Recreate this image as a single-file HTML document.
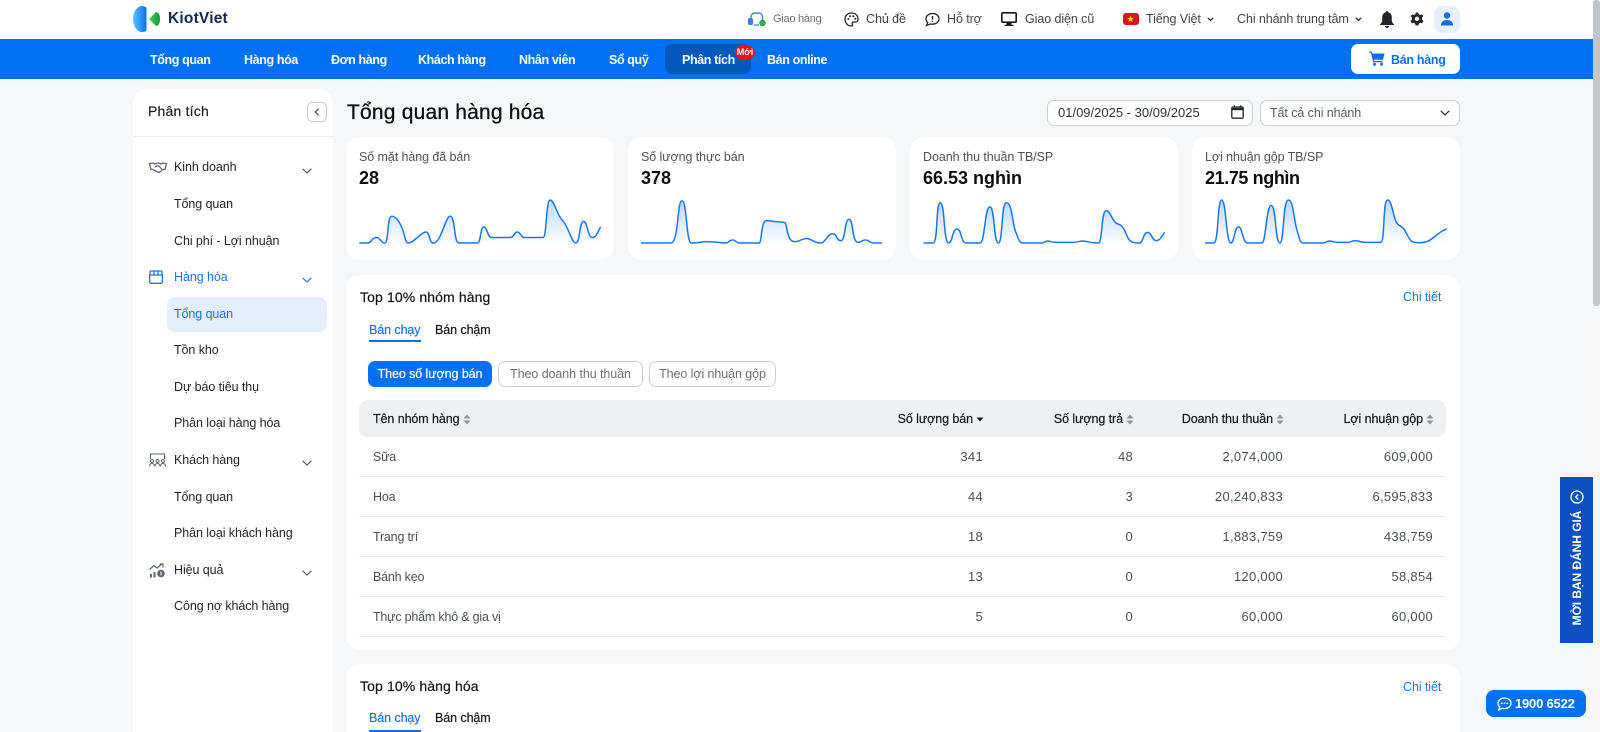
<!DOCTYPE html>
<html lang="vi"><head><meta charset="utf-8"><title>Tổng quan hàng hóa</title>
<style>
*{box-sizing:border-box}
html,body{margin:0;padding:0;width:1600px;height:732px;overflow:hidden;background:#f6f7f9;font-family:"Liberation Sans",Arial,sans-serif;color:#1a1c20}
#w{position:absolute;left:0;top:0;width:1600px;height:732px;overflow:hidden;background:#f6f7f9}
.a{position:absolute}
.t{position:absolute;white-space:nowrap;transform:translateY(-50%);font-size:12.500px;line-height:18px;letter-spacing:-.08px}
.r{transform:translate(-100%,-50%)}
.n{color:#fff;font-weight:700;font-size:12.500px;letter-spacing:-.38px}
.top{color:#3f444d}
.s{color:#1f2329}
.card{position:absolute;background:#fff;border-radius:14px}
.lab{color:#4d525a}
.val{font-weight:700;font-size:18px;color:#0c0e12;letter-spacing:0}
.h{font-weight:500;color:#111317;font-size:14px;letter-spacing:.12px;-webkit-text-stroke:.2px #111317}
.th{color:#16181c;-webkit-text-stroke:.2px #16181c}
.td{color:#4a4f57;letter-spacing:-.2px}
.num{color:#4a4f57;font-size:13px;letter-spacing:.3px}
.line{position:absolute;left:359px;width:1087px;height:1px;background:#e6e7ea}
.btn{position:absolute;top:361px;height:26px;border-radius:7px;border:1px solid #ccd0d6;background:#fff;color:#6b7078;font-size:12.500px;line-height:24px;text-align:center;letter-spacing:-.08px;white-space:nowrap}
svg{position:absolute;overflow:visible}
.sp{stroke:#1677f5;stroke-width:4.300;fill:none}
</style></head><body><div id="w">
<!-- header -->
<div class="a" style="left:0;top:0;width:1593px;height:39px;background:#fff"></div>
<svg style="left:133px;top:6px" width="28" height="26" viewBox="0 0 28 26"><defs><linearGradient id="lg" x1="0" x2="1" y1="0" y2="0"><stop offset="0" stop-color="#5cc4fb"/><stop offset="1" stop-color="#0a70ef"/></linearGradient><linearGradient id="lh" x1="0" x2="1"><stop offset="0" stop-color="#4fd14a"/><stop offset="1" stop-color="#0a9c36"/></linearGradient></defs><path d="M8 0C11 0 13 1 13.500 2V24C13 25.500 11 26 8 26C3 25 0 19 0 13C0 7 3 1 8 0Z" fill="url(#lg)"/><path d="M16 13L23 6C25.500 6 27 9 27 13C27 17 25.500 20 23 20Z" fill="url(#lh)"/></svg>
<div class="t" style="left:168px;top:19px;font-size:15.500px;font-weight:700;color:#10294f;letter-spacing:.2px">KiotViet</div>

<svg style="left:748px;top:12px" width="18" height="15" viewBox="0 0 18 15"><path d="M3 9V5C3 2.500 5 1 7 1H11C13 1 14.500 2.500 14.500 5V9" fill="none" stroke="#3b82e8" stroke-width="1.400"/><rect x="0" y="6" width="5" height="7" rx="1.500" fill="#3b82e8"/><circle cx="14.500" cy="11" r="2.800" fill="#2db84a" stroke="#12812f" stroke-width=".6"/><path d="M6 13H11" stroke="#3b82e8" stroke-width="1.300"/></svg>
<div class="t" style="left:773px;top:19px;font-size:11px;color:#6c7077;letter-spacing:-.25px">Giao hàng</div>
<svg style="left:844px;top:12px" width="15" height="15" viewBox="0 0 15 15"><path d="M7.500 1C3.600 1 1 3.800 1 7.300C1 11 3.800 14 7.300 14C8.800 14 8.800 12.800 8.300 12C7.800 11 8.300 10 9.500 10H11.500C13 10 14 8.800 14 7C14 3.500 11.300 1 7.500 1Z" fill="none" stroke="#22252a" stroke-width="1.300"/><circle cx="4.300" cy="7" r="1" fill="#22252a"/><circle cx="6" cy="4.200" r="1" fill="#22252a"/><circle cx="9.300" cy="4.200" r="1" fill="#22252a"/><circle cx="11.300" cy="6.800" r="1" fill="#22252a"/></svg>
<div class="t top" style="left:866px;top:19px">Chủ đề</div>
<svg style="left:925px;top:12px" width="15" height="15" viewBox="0 0 15 15"><path d="M7.500 1.500C3.800 1.500 1 3.800 1 6.800C1 8.300 1.700 9.600 2.800 10.500L1.500 13.500L5.200 12C5.900 12.100 6.700 12.200 7.500 12.200C11.200 12.200 14 9.800 14 6.800C14 3.800 11.200 1.500 7.500 1.500Z" fill="none" stroke="#22252a" stroke-width="1.300"/><path d="M7.500 4V7.500M7.500 8.800V10" stroke="#22252a" stroke-width="1.400"/></svg>
<div class="t top" style="left:947px;top:19px">Hỗ trợ</div>
<svg style="left:1001px;top:12px" width="16" height="15" viewBox="0 0 16 15"><rect x=".8" y=".8" width="14.400" height="9.400" rx="1" fill="#fff" stroke="#17191d" stroke-width="1.600"/><path d="M5.500 10.500H10.500V12.800H12.500V14H3.500V12.800H5.500Z" fill="#17191d"/></svg>
<div class="t top" style="left:1025px;top:19px">Giao diện cũ</div>
<div class="a" style="left:1123px;top:13px;width:16px;height:12px;background:#d8141c;border-radius:3px"></div>
<div class="t" style="left:1126.500px;top:19px;color:#ffe000;font-size:9px;letter-spacing:0;line-height:10px">★</div>
<div class="t top" style="left:1146px;top:19px">Tiếng Việt</div>
<svg style="left:1207px;top:17px" width="7" height="5" viewBox="0 0 7 5"><path d="M.8 .8L3.500 3.500L6.200 .8" fill="none" stroke="#2c2f35" stroke-width="1.300"/></svg>
<div class="t top" style="left:1237px;top:19px">Chi nhánh trung tâm</div>
<svg style="left:1355px;top:17px" width="7" height="5" viewBox="0 0 7 5"><path d="M.8 .8L3.500 3.500L6.200 .8" fill="none" stroke="#2c2f35" stroke-width="1.300"/></svg>
<svg style="left:1380px;top:10px" width="14" height="18" viewBox="0 0 14 18"><path d="M7 1C7.800 1 8.200 1.500 8.200 2.200C10.500 2.800 11.800 4.800 11.800 7.200V10.500C11.800 12 12.600 13 14 14.300V15H0V14.300C1.400 13 2.200 12 2.200 10.500V7.200C2.200 4.800 3.500 2.800 5.800 2.200C5.800 1.500 6.200 1 7 1Z" fill="#22252b"/><path d="M5 16H9C9 17.200 8 18 7 18C6 18 5 17.200 5 16Z" fill="#22252b"/></svg>
<svg style="left:1410px;top:12px" width="14" height="14" viewBox="0 0 14 14"><path d="M5.800 .5H8.200L8.600 2.300L10.100 3L11.800 2.200L13.300 4.200L12 5.500V7.500L13.500 9L12.200 11.300L10.200 10.800L8.800 11.700L8.300 13.500H5.700L5.200 11.700L3.800 10.800L1.800 11.300L.5 9L2 7.500V5.500L.7 4.200L2.200 2.200L3.900 3L5.400 2.300Z" fill="#22252b"/><circle cx="7" cy="6.800" r="2.200" fill="#fff"/></svg>
<div class="a" style="left:1434px;top:6px;width:26px;height:27px;background:#e5f0fc;border-radius:8px"></div>
<svg style="left:1441px;top:12px" width="12" height="14" viewBox="0 0 12 14"><circle cx="6" cy="3.500" r="3.200" fill="#0f6fe8"/><path d="M0 13.500C0 9.800 2.500 8 6 8C9.500 8 12 9.800 12 13.500Z" fill="#0f6fe8"/></svg>

<!-- nav -->
<div class="a" style="left:0;top:39px;width:1593px;height:40px;background:#0070f4"></div>
<div class="a" style="left:665px;top:44px;width:86px;height:30px;background:#0458ba;border-radius:7px"></div>
<div class="t n" style="left:150px;top:60px">Tổng quan</div>
<div class="t n" style="left:244px;top:60px">Hàng hóa</div>
<div class="t n" style="left:331px;top:60px">Đơn hàng</div>
<div class="t n" style="left:418px;top:60px">Khách hàng</div>
<div class="t n" style="left:519px;top:60px">Nhân viên</div>
<div class="t n" style="left:609px;top:60px">Sổ quỹ</div>
<div class="t n" style="left:682px;top:60px">Phân tích</div>
<div class="t n" style="left:767px;top:60px">Bán online</div>
<div class="a" style="left:735px;top:46px;width:20px;height:13px;background:#ee0f1c;border-radius:7px;color:#fff;font-size:9px;font-weight:700;line-height:13px;text-align:center">Mới</div>
<div class="a" style="left:1351px;top:44px;width:109px;height:30px;background:#fff;border-radius:7px"></div>
<svg style="left:1369px;top:51px" width="16" height="15" viewBox="0 0 16 15"><path d="M0 .5H2.800L3.400 2.500H15.500L14 8.800H5L5.300 10H13.800V11.300H4.200L2 1.800H0Z" fill="#0a6fee"/><circle cx="5.500" cy="13.300" r="1.500" fill="#0a6fee"/><circle cx="12.500" cy="13.300" r="1.500" fill="#0a6fee"/></svg>
<div class="t" style="left:1391px;top:60px;color:#0a6fee;font-weight:700;letter-spacing:-.3px">Bán hàng</div>

<!-- sidebar -->
<div class="a" style="left:133px;top:89px;width:200px;height:643px;background:#fff;border-radius:14px 14px 0 0"></div>
<div class="a" style="left:133px;top:136px;width:200px;height:1px;background:#ebecef"></div>
<div class="t" style="left:148px;top:111px;font-size:14px;font-weight:500;color:#1a1c20;letter-spacing:.2px;-webkit-text-stroke:.15px #1a1c20">Phân tích</div>
<div class="a" style="left:307px;top:102px;width:20px;height:20px;border:1px solid #c6c9cf;border-radius:5px"></div>
<svg style="left:314px;top:108px" width="6" height="8" viewBox="0 0 6 8"><path d="M4.500 .8L1.300 4L4.500 7.200" fill="none" stroke="#3a3e45" stroke-width="1.100"/></svg>

<svg style="left:149px;top:162px" width="18" height="11" viewBox="0 0 18 11"><path d="M.5 1.500L4 1L6 2L9 .8L12 2L14 1L17.500 1.500L16 7.500H14L10 10.500L7.500 9.500L4 7.500H2Z" fill="none" stroke="#5c6674" stroke-width="1.300"/><path d="M6 5L9 3.500L13 7" fill="none" stroke="#5c6674" stroke-width="1.200"/></svg>
<svg style="left:149px;top:270px" width="14" height="14" viewBox="0 0 14 14"><path d="M1 5V2.500C1 1.500 1.600 1 2.500 1H11.500C12.400 1 13 1.500 13 2.500V5M.7 5H13.300V11.800C13.300 12.700 12.700 13.300 11.800 13.300H2.200C1.300 13.300.7 12.700.7 11.800ZM5 1V5M9 1V5" fill="none" stroke="#1475ef" stroke-width="1.300"/></svg>
<svg style="left:149px;top:453px" width="17" height="14" viewBox="0 0 17 14"><path d="M1.500 6V1H15.500V6" fill="none" stroke="#5c6674" stroke-width="1.100"/><g fill="none" stroke="#5c6674" stroke-width="1"><circle cx="3" cy="8" r="1.500"/><circle cx="8.500" cy="8" r="1.500"/><circle cx="14" cy="8" r="1.500"/><path d="M.5 13.500C.5 11.500 1.500 10.500 3 10.500C4.500 10.500 5.500 11.500 5.500 13.500M6 13.500C6 11.500 7 10.500 8.500 10.500C10 10.500 11 11.500 11 13.500M11.500 13.500C11.500 11.500 12.500 10.500 14 10.500C15.500 10.500 16.500 11.500 16.500 13.500"/></g></svg>
<svg style="left:149px;top:563px" width="16" height="15" viewBox="0 0 16 15"><path d="M.5 6.500L5 2.500L8 5L13 1M10.500 1H14V4.500" fill="none" stroke="#5c6674" stroke-width="1.200"/><rect x="1" y="11" width="2" height="3.500" fill="#5c6674"/><rect x="4.500" y="9" width="2" height="5.500" fill="#5c6674"/><circle cx="12" cy="10.500" r="3.800" fill="#5c6674"/><path d="M12 8.500V12.500" stroke="#fff" stroke-width="1"/></svg>
<svg style="left:302px;top:168px" width="10" height="6" viewBox="0 0 10 6"><path d="M.6 .8L5 5L9.400 .8" fill="none" stroke="#4a4f57" stroke-width="1.100"/></svg>
<svg style="left:302px;top:277px" width="10" height="6" viewBox="0 0 10 6"><path d="M.6 .8L5 5L9.400 .8" fill="none" stroke="#1475ef" stroke-width="1.100"/></svg>
<svg style="left:302px;top:460px" width="10" height="6" viewBox="0 0 10 6"><path d="M.6 .8L5 5L9.400 .8" fill="none" stroke="#4a4f57" stroke-width="1.100"/></svg>
<svg style="left:302px;top:570px" width="10" height="6" viewBox="0 0 10 6"><path d="M.6 .8L5 5L9.400 .8" fill="none" stroke="#4a4f57" stroke-width="1.100"/></svg>
<div class="a" style="left:167px;top:297px;width:160px;height:35px;background:#e3effc;border-radius:8px"></div>
<div class="t s" style="left:174px;top:167px">Kinh doanh</div>
<div class="t s" style="left:174px;top:204px">Tổng quan</div>
<div class="t s" style="left:174px;top:241px">Chi phí - Lợi nhuận</div>
<div class="t" style="left:174px;top:277px;color:#1475ef">Hàng hóa</div>
<div class="t" style="left:174px;top:314px;color:#1475ef">Tổng quan</div>
<div class="t s" style="left:174px;top:350px">Tồn kho</div>
<div class="t s" style="left:174px;top:387px">Dự báo tiêu thụ</div>
<div class="t s" style="left:174px;top:423px">Phân loại hàng hóa</div>
<div class="t s" style="left:174px;top:460px">Khách hàng</div>
<div class="t s" style="left:174px;top:497px">Tổng quan</div>
<div class="t s" style="left:174px;top:533px">Phân loại khách hàng</div>
<div class="t s" style="left:174px;top:570px">Hiệu quả</div>
<div class="t s" style="left:174px;top:606px">Công nợ khách hàng</div>

<!-- title + filters -->
<div class="t" style="left:347px;top:113px;font-size:21px;font-weight:500;line-height:28px;color:#0e1013;letter-spacing:.2px;-webkit-text-stroke:.3px #0e1013">Tổng quan hàng hóa</div>
<div class="a" style="left:1047px;top:100px;width:206px;height:26px;background:#fff;border:1px solid #cdd0d6;border-radius:7px"></div>
<div class="t" style="left:1058px;top:113px;color:#30343a;font-size:13px;letter-spacing:0">01/09/2025 - 30/09/2025</div>
<svg style="left:1231px;top:105px" width="13" height="14" viewBox="0 0 13 14"><rect x=".8" y="2" width="11.400" height="11.200" rx="1.200" fill="none" stroke="#22252b" stroke-width="1.300"/><path d="M.8 4H12.200" stroke="#22252b" stroke-width="2.400"/><path d="M3.500 .3V2.500M9.500 .3V2.500" stroke="#22252b" stroke-width="1.300"/></svg>
<div class="a" style="left:1260px;top:100px;width:200px;height:26px;background:#fff;border:1px solid #cdd0d6;border-radius:7px"></div>
<div class="t" style="left:1270px;top:113px;color:#565b63">Tất cả chi nhánh</div>
<svg style="left:1440px;top:110px" width="10" height="6" viewBox="0 0 10 6"><path d="M.8 .8L5 5L9.200 .8" fill="none" stroke="#2c2f35" stroke-width="1.300"/></svg>

<!-- KPI cards -->
<div class="card" style="left:346px;top:137px;width:268px;height:123px"></div>
<div class="card" style="left:628px;top:137px;width:268px;height:123px"></div>
<div class="card" style="left:910px;top:137px;width:268px;height:123px"></div>
<div class="card" style="left:1192px;top:137px;width:268px;height:123px"></div>
<div class="t lab" style="left:359px;top:157px">Số mặt hàng đã bán</div>
<div class="t val" style="left:359px;top:178px">28</div>
<div class="t lab" style="left:641px;top:157px">Số lượng thực bán</div>
<div class="t val" style="left:641px;top:178px">378</div>
<div class="t lab" style="left:923px;top:157px">Doanh thu thuần TB/SP</div>
<div class="t val" style="left:923px;top:178px">66.53 nghìn</div>
<div class="t lab" style="left:1205px;top:157px">Lợi nhuận gộp TB/SP</div>
<div class="t val" style="left:1205px;top:178px;letter-spacing:-.4px">21.75 nghìn</div>

<svg style="left:340px;top:127px" width="540" height="134.300" viewBox="0 0 1568 390">
<defs><linearGradient id="g" x1="0" x2="0" y1="0" y2="1"><stop offset="0" stop-color="#1677f5" stop-opacity=".28"/><stop offset="1" stop-color="#1677f5" stop-opacity=".02"/></linearGradient></defs>
<path fill="url(#g)" d="M56 337H80C92 337 92 321 105 321C118 321 118 337 130 337C142 337 136 259 150 259C165 259 175 280 182 298C188 315 190 337 197 337C215 337 235 305 250 305C260 305 260 337 270 337C295 337 305 259 320 259C335 259 330 337 345 337H400C408 337 408 290 417 290C428 290 428 321 440 321H495C505 321 505 305 515 305C525 305 525 321 535 321H590C600 321 598 212 610 212C622 212 630 255 645 270C665 290 672 337 685 337C697 337 695 274 707 274C720 274 718 321 733 321C745 321 750 300 757 290V337H56Z"/>
<path class="sp" d="M56 337H80C92 337 92 321 105 321C118 321 118 337 130 337C142 337 136 259 150 259C165 259 175 280 182 298C188 315 190 337 197 337C215 337 235 305 250 305C260 305 260 337 270 337C295 337 305 259 320 259C335 259 330 337 345 337H400C408 337 408 290 417 290C428 290 428 321 440 321H495C505 321 505 305 515 305C525 305 525 321 535 321H590C600 321 598 212 610 212C622 212 630 255 645 270C665 290 672 337 685 337C697 337 695 274 707 274C720 274 718 321 733 321C745 321 750 300 757 290"/>
<path fill="url(#g)" d="M874 337H960C985 337 978 214 993 214C1008 214 1005 337 1020 337C1040 337 1050 333 1065 333C1085 333 1110 337 1120 337C1130 337 1130 328 1140 328C1150 328 1150 337 1160 337H1217C1225 337 1222 272 1238 272L1290 277C1300 277 1295 333 1320 333C1335 333 1340 324 1355 324C1370 324 1375 337 1395 337C1410 337 1415 310 1430 310C1445 310 1440 330 1455 330C1468 330 1465 268 1478 268C1492 268 1485 335 1505 335C1515 335 1515 328 1525 328C1535 328 1540 337 1550 337H1574V337H874Z"/>
<path class="sp" d="M874 337H960C985 337 978 214 993 214C1008 214 1005 337 1020 337C1040 337 1050 333 1065 333C1085 333 1110 337 1120 337C1130 337 1130 328 1140 328C1150 328 1150 337 1160 337H1217C1225 337 1222 272 1238 272L1290 277C1300 277 1295 333 1320 333C1335 333 1340 324 1355 324C1370 324 1375 337 1395 337C1410 337 1415 310 1430 310C1445 310 1440 330 1455 330C1468 330 1465 268 1478 268C1492 268 1485 335 1505 335C1515 335 1515 328 1525 328C1535 328 1540 337 1550 337H1574"/>
</svg>
<svg style="left:890px;top:127px" width="540" height="134.300" viewBox="0 0 1568 390">
<path fill="url(#g)" d="M97 337H125C140 337 132 220 146 220C160 220 155 337 170 337C182 337 180 296 195 296C208 296 205 337 222 337H262C275 337 275 232 290 232C305 232 300 337 315 337C328 337 322 220 338 220C355 220 355 280 365 305C372 320 375 337 385 337H440C448 337 450 331 458 331C465 331 470 335 480 335H530C545 335 550 331 560 331C570 331 580 337 605 337C618 337 612 243 628 243C640 243 645 275 660 281C680 287 680 300 690 320C695 333 705 337 725 337C735 337 735 306 748 306C760 306 760 330 773 330C785 330 790 315 798 306V337H97Z"/>
<path class="sp" d="M97 337H125C140 337 132 220 146 220C160 220 155 337 170 337C182 337 180 296 195 296C208 296 205 337 222 337H262C275 337 275 232 290 232C305 232 300 337 315 337C328 337 322 220 338 220C355 220 355 280 365 305C372 320 375 337 385 337H440C448 337 450 331 458 331C465 331 470 335 480 335H530C545 335 550 331 560 331C570 331 580 337 605 337C618 337 612 243 628 243C640 243 645 275 660 281C680 287 680 300 690 320C695 333 705 337 725 337C735 337 735 306 748 306C760 306 760 330 773 330C785 330 790 315 798 306"/>
<path fill="url(#g)" d="M915 337H940C955 337 950 212 963 212C977 212 975 337 990 337C1000 337 1000 290 1012 290C1025 290 1022 337 1040 337H1080C1092 337 1092 228 1107 228C1122 228 1118 337 1132 337C1145 337 1140 212 1157 212C1172 212 1172 270 1182 300C1188 320 1190 337 1200 337H1255C1265 337 1268 331 1275 331C1285 331 1290 335 1300 335H1330C1340 335 1340 330 1350 330C1360 330 1370 335 1380 335H1425C1438 335 1430 212 1445 212C1460 212 1460 275 1478 285C1500 295 1500 320 1515 332C1525 337 1540 337 1555 334C1575 331 1590 304 1617 296V337H915Z"/>
<path class="sp" d="M915 337H940C955 337 950 212 963 212C977 212 975 337 990 337C1000 337 1000 290 1012 290C1025 290 1022 337 1040 337H1080C1092 337 1092 228 1107 228C1122 228 1118 337 1132 337C1145 337 1140 212 1157 212C1172 212 1172 270 1182 300C1188 320 1190 337 1200 337H1255C1265 337 1268 331 1275 331C1285 331 1290 335 1300 335H1330C1340 335 1340 330 1350 330C1360 330 1370 335 1380 335H1425C1438 335 1430 212 1445 212C1460 212 1460 275 1478 285C1500 295 1500 320 1515 332C1525 337 1540 337 1555 334C1575 331 1590 304 1617 296"/>
</svg>

<!-- Top nhóm hàng -->
<div class="card" style="left:346px;top:275px;width:1114px;height:375px"></div>
<div class="t h" style="left:360px;top:297px">Top 10% nhóm hàng</div>
<div class="t" style="left:1403px;top:297px;color:#1475ef">Chi tiết</div>
<div class="t" style="left:369px;top:330px;color:#1475ef;-webkit-text-stroke:.2px #1475ef">Bán chạy</div>
<div class="t" style="left:435px;top:330px;color:#16181c;-webkit-text-stroke:.2px #16181c">Bán chậm</div>
<div class="a" style="left:369px;top:340px;width:52px;height:2px;background:#0a6fee"></div>
<div class="btn" style="left:368px;width:124px;background:#0070f4;border-color:#0070f4;color:#fff;-webkit-text-stroke:.2px #fff">Theo số lượng bán</div>
<div class="btn" style="left:498px;width:145px">Theo doanh thu thuần</div>
<div class="btn" style="left:649px;width:127px">Theo lợi nhuận gộp</div>
<div class="a" style="left:359px;top:400px;width:1087px;height:37px;background:#eff0f2;border-radius:9px"></div>
<div class="t th" style="left:373px;top:419px">Tên nhóm hàng</div>
<div class="t th r" style="left:973px;top:419px">Số lượng bán</div>
<div class="t th r" style="left:1123px;top:419px">Số lượng trả</div>
<div class="t th r" style="left:1273px;top:419px">Doanh thu thuần</div>
<div class="t th r" style="left:1423px;top:419px">Lợi nhuận gộp</div>
<svg style="left:463px;top:414px" width="8" height="11" viewBox="0 0 8 11"><path d="M4 .5L7.500 4.500H.5ZM4 10.500L.5 6.500H7.500Z" fill="#8e939b"/></svg>
<svg style="left:976px;top:417px" width="8" height="5" viewBox="0 0 8 5"><path d="M4 4.500L.5 .5H7.500Z" fill="#1c1e22"/></svg>
<svg style="left:1126px;top:414px" width="8" height="11" viewBox="0 0 8 11"><path d="M4 .5L7.500 4.500H.5ZM4 10.500L.5 6.500H7.500Z" fill="#8e939b"/></svg>
<svg style="left:1276px;top:414px" width="8" height="11" viewBox="0 0 8 11"><path d="M4 .5L7.500 4.500H.5ZM4 10.500L.5 6.500H7.500Z" fill="#8e939b"/></svg>
<svg style="left:1426px;top:414px" width="8" height="11" viewBox="0 0 8 11"><path d="M4 .5L7.500 4.500H.5ZM4 10.500L.5 6.500H7.500Z" fill="#8e939b"/></svg>

<div class="t td" style="left:373px;top:457px">Sữa</div>
<div class="t num r" style="left:983px;top:457px">341</div><div class="t num r" style="left:1133px;top:457px">48</div><div class="t num r" style="left:1283px;top:457px">2,074,000</div><div class="t num r" style="left:1433px;top:457px">609,000</div>
<div class="line" style="top:476px"></div>
<div class="t td" style="left:373px;top:497px">Hoa</div>
<div class="t num r" style="left:983px;top:497px">44</div><div class="t num r" style="left:1133px;top:497px">3</div><div class="t num r" style="left:1283px;top:497px">20,240,833</div><div class="t num r" style="left:1433px;top:497px">6,595,833</div>
<div class="line" style="top:516px"></div>
<div class="t td" style="left:373px;top:537px">Trang trí</div>
<div class="t num r" style="left:983px;top:537px">18</div><div class="t num r" style="left:1133px;top:537px">0</div><div class="t num r" style="left:1283px;top:537px">1,883,759</div><div class="t num r" style="left:1433px;top:537px">438,759</div>
<div class="line" style="top:556px"></div>
<div class="t td" style="left:373px;top:577px">Bánh kẹo</div>
<div class="t num r" style="left:983px;top:577px">13</div><div class="t num r" style="left:1133px;top:577px">0</div><div class="t num r" style="left:1283px;top:577px">120,000</div><div class="t num r" style="left:1433px;top:577px">58,854</div>
<div class="line" style="top:596px"></div>
<div class="t td" style="left:373px;top:617px">Thực phẩm khô &amp; gia vị</div>
<div class="t num r" style="left:983px;top:617px">5</div><div class="t num r" style="left:1133px;top:617px">0</div><div class="t num r" style="left:1283px;top:617px">60,000</div><div class="t num r" style="left:1433px;top:617px">60,000</div>
<div class="line" style="top:636px"></div>

<!-- Top hàng hóa -->
<div class="card" style="left:346px;top:664px;width:1114px;height:68px;border-radius:14px 14px 0 0"></div>
<div class="t h" style="left:360px;top:686px">Top 10% hàng hóa</div>
<div class="t" style="left:1403px;top:687px;color:#1475ef">Chi tiết</div>
<div class="t" style="left:369px;top:718px;color:#1475ef;-webkit-text-stroke:.2px #1475ef">Bán chạy</div>
<div class="t" style="left:435px;top:718px;color:#16181c;-webkit-text-stroke:.2px #16181c">Bán chậm</div>
<div class="a" style="left:369px;top:730px;width:52px;height:2px;background:#0a6fee"></div>

<!-- floating -->
<div class="a" style="left:1560px;top:477px;width:33px;height:166px;background:#0a50c4"></div>
<svg style="left:1570px;top:490px" width="14" height="14" viewBox="0 0 14 14"><circle cx="7" cy="7" r="6" fill="none" stroke="#fff" stroke-width="1.300"/><path d="M8.200 4.500L5.700 7L8.200 9.500" fill="none" stroke="#fff" stroke-width="1.400"/></svg>
<div class="a" style="left:1577px;top:568px;transform:translate(-50%,-50%) rotate(-90deg);white-space:nowrap;color:#fff;font-size:12px;font-weight:700;line-height:16px;letter-spacing:-.05px">MỜI BẠN ĐÁNH GIÁ</div>
<div class="a" style="left:1486px;top:690px;width:100px;height:27px;background:#0070f4;border-radius:8px"></div>
<svg style="left:1497px;top:697px" width="15" height="14" viewBox="0 0 15 14"><path d="M7.500 1C3.800 1 1 3.400 1 6.300C1 7.800 1.700 9.100 2.800 10L1.800 13L5.200 11.300C5.900 11.500 6.700 11.600 7.500 11.600C11.200 11.600 14 9.200 14 6.300C14 3.400 11.200 1 7.500 1Z" fill="none" stroke="#fff" stroke-width="1.300"/><circle cx="4.800" cy="6.300" r=".9" fill="#fff"/><circle cx="7.500" cy="6.300" r=".9" fill="#fff"/><circle cx="10.200" cy="6.300" r=".9" fill="#fff"/></svg>
<div class="t" style="left:1515px;top:703.500px;color:#fff;font-size:13px;font-weight:700;letter-spacing:-.2px">1900 6522</div>

<!-- scrollbar -->
<div class="a" style="left:1593px;top:0;width:7px;height:732px;background:#f6f6f6"></div>
<div class="a" style="left:1593px;top:0;width:7px;height:306px;background:#c1c5cc;border-radius:3px"></div>
</div></body></html>
